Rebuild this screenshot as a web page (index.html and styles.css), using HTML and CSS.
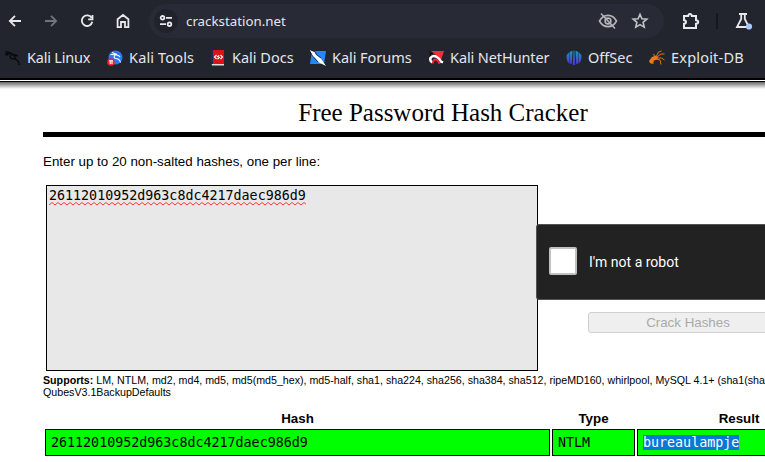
FILE: index.html
```html
<!DOCTYPE html>
<html lang="en">
<head>
<meta charset="utf-8">
<title>CrackStation</title>
<link rel="stylesheet" href="styles.css">
</head>
<body>
<header class="chrome">
  <div class="toolbar">
    <svg class="nav" viewBox="0 0 16 16"><path d="M14 8H3M8 2.800 2.800 8 8 13.200"/></svg>
    <svg class="nav forward" viewBox="0 0 16 16"><path d="M2 8h11M8 2.800 13.200 8 8 13.200"/></svg>
    <svg class="nav" viewBox="0 0 16 16"><path d="M12.600 4.800A5.300 5.300 0 1 0 13.300 8.800M13.500 2v4.300H9.200"/></svg>
    <svg class="nav" viewBox="0 0 16 16"><path d="M2.600 6.200 8 2l5.400 4.200v7.900H10V9H6v5.100H2.600z"/></svg>
    <div class="omnibox">
      <span class="site"><svg viewBox="0 0 14 14"><circle cx="3.500" cy="3.800" r="1.800"/><circle cx="10.500" cy="10.200" r="1.800"/><path d="M7 3.800h6M1 10.200h6"/></svg></span>
      <span class="url">crackstation.net</span>
      <svg class="eye" viewBox="0 0 20 18"><path d="M1.500 9Q4.500 3.400 10 3.400T18.500 9Q15.500 14.600 10 14.600T1.500 9z"/><circle cx="10" cy="9" r="2.900"/><path d="M3 1.500 17 16.500"/></svg>
      <svg class="star" viewBox="0 0 18 18"><path d="m9 2.200 1.900 4.500 4.900.4-3.700 3.200 1.100 4.800L9 12.600l-4.200 2.500 1.100-4.800-3.700-3.200 4.900-.4z"/></svg>
    </div>
    <svg class="puzzle" viewBox="0 0 18 18"><path d="M2 4h4.200q.2-2 1.800-2t1.800 2H14v4.200q2.200.2 2.200 1.800T14 11.800V16H2v-4.200q2-.2 2-1.800T2 8.200z"/></svg>
    <span class="divider"></span>
    <svg class="flask" viewBox="0 0 18 18"><path d="M4 2h8M6.200 2v5L2 15h12L9.800 7V2"/><circle class="dot" cx="14" cy="14.500" r="3.100"/></svg>
  </div>
  <nav class="bookmarks">
    <a class="bm linux"><svg viewBox="0 0 16 16"><path class="dark" d="M.5 1.500 4 2.500 7.500 4M0 4l4-.5L1.500 5.500M6 5Q4 7 6.500 8.500q4 0 6 2 1.500 1.500 2 4.500M5.500 4 9 4.500l4 1.500M8 5l3 3"/></svg>Kali Linux</a>
    <a class="bm tools"><svg viewBox="0 0 16 16"><circle cx="8.500" cy="7.500" r="7" fill="#2777ff"/><path class="white" d="m3.500 4.500 5 .3q4 .7 4.500 2.200M8 5Q6 7.500 8.500 8.500q4 0 5 4M5 2.500l5 2"/><circle cx="4" cy="12" r="3.800" fill="#ed2433"/><path class="white" d="M2 10.800h4M3.200 11v3M5 11v3"/></svg>Kali Tools</a>
    <a class="bm docs"><svg viewBox="0 0 16 16"><path d="M1 0h13v15H1z" fill="#d91419"/><path d="M1 0h2v14H1z" fill="#192955"/><path d="M2 14h12v1.500H2z" fill="#ddd"/><path class="white" d="M6.500 5 4.500 7l2 2M10.500 5l2 2-2 2M9.200 5.500 7.500 6.500l1.800 1-1.800 1.500"/></svg>Kali Docs</a>
    <a class="bm forums"><svg viewBox="0 0 16 16"><path d="M2 1h14l-2 13H0z" fill="#2388ff"/><path d="m0 0 4.500 2 1.500 3 5 3.500 2 3L16 16l-5-2.500-2-1L5 8 2.500 6z" fill="#fff"/><path d="m1 0 4.500 2 1 2.500L11 8M0 2l3 4.500L8 12" fill="none" stroke="#111" stroke-width=".7"/></svg>Kali Forums</a>
    <a class="bm nethunter"><svg viewBox="0 0 16 16"><path d="M3 1h13l-3 9-5-5z" fill="#f42d38"/><path d="m1 1 4 2-3 4z" fill="#111"/><path d="M4.500 12.500Q1.500 11 2.500 8 4.500 5 8 6.500q3 1.500 5 5l2 1" fill="none" stroke="#fff" stroke-width="2.500"/><path d="M5 13.500q0-4 2.500-4t4 4.500" fill="none" stroke="#ed2939" stroke-width="1.800"/></svg>Kali NetHunter</a>
    <a class="bm offsec"><svg viewBox="0 0 16 16"><defs><linearGradient id="o" gradientUnits="userSpaceOnUse" x1="0" y1="0" x2="0" y2="15"><stop stop-color="#13a3b3"/><stop offset="1" stop-color="#5b27dc"/></linearGradient></defs><path fill="url(#o)" d="M3 2.500v11Q.5 11 .5 7.500T3 2.500zM3.500 2 6.500.8 5.800 14l-2.300-.5zM7.600.5h.8l.8 14.500H6.800zM9.500.8l3 1.200v11.500l-2.300.5zM13 2.500q2.500 1.500 2.500 5T13 13.500z"/></svg>OffSec</a>
    <a class="bm exploit"><svg viewBox="0 0 16 16"><path d="m0 11 3-4 4-1.500 2 2-1 2-3 1L3 14l-2-1z" fill="#ec7b13"/><path class="orange" d="M7 7 9.500 2l3-1M8 7l4-3h3.500M8 8h4.500l3 2M7 9l4 1 1 4.500M6 7 4.500 4M4 10v4"/></svg>Exploit-DB</a>
  </nav>
</header>
<div class="page-edge"></div>
<main class="viewport">
<div class="page">
  <h1>Free Password Hash Cracker</h1>
  <p class="intro">Enter up to 20 non-salted hashes, one per line:</p>
  <div class="form">
    <div class="hashes"><span class="misspelt">26112010952d963c8dc4217daec986d9<svg class="wave" width="257" height="4"><defs><pattern id="w" width="6" height="4" patternUnits="userSpaceOnUse"><path d="M-1 2 0 3 3 .5 6 3l1-1" fill="none" stroke="#f22" stroke-width=".9"/></pattern></defs><rect width="257" height="4" fill="url(#w)"/></svg></span></div>
    <div class="side">
      <div class="captcha"><span class="check"></span><span class="label">I'm not a robot</span></div>
      <div class="crack">Crack Hashes</div>
    </div>
  </div>
  <p class="supports"><b>Supports:</b> LM, NTLM, md2, md4, md5, md5(md5_hex), md5-half, sha1, sha224, sha256, sha384, sha512, ripeMD160, whirlpool, MySQL 4.1+ (sha1(sha<br>QubesV3.1BackupDefaults</p>
  <table class="results">
    <thead><tr><th class="c-hash">Hash</th><th class="c-type">Type</th><th class="c-result">Result</th></tr></thead>
    <tbody><tr><td>26112010952d963c8dc4217daec986d9</td><td>NTLM</td><td><span class="selected">bureaulampje</span></td></tr></tbody>
  </table>
</div>
</main>
</body>
</html>
```
FILE: styles.css
```css
* { box-sizing: border-box; }
html, body { overflow: hidden; }
body { margin: 0; width: 765px; height: 462px; background: #fff; color: #000; font-family: "Liberation Sans", Arial, sans-serif; }
svg { display: block; flex: none; }

.chrome { height: 78px; background: #22252e; color: #e4e6eb; font-family: "Noto Sans", sans-serif; }
.toolbar { display: flex; align-items: center; height: 42px; padding-left: 7px; }
.toolbar svg { fill: none; stroke: #e8e9ec; stroke-width: 1.8; }
.nav { width: 16px; height: 16px; margin-right: 20px; }
.toolbar .forward { stroke: #72747a; }
.omnibox { display: flex; align-items: center; width: 515px; height: 34px; margin: 0 18px 0 -2px; padding-left: 5px; border-radius: 17px; background: #282a35; }
.site { display: flex; align-items: center; justify-content: center; width: 24px; height: 24px; border-radius: 50%; background: #20232b; }
.site svg { width: 14px; height: 14px; }
.url { width: 412px; margin-left: 8px; font-size: 13.3px; }
.toolbar .eye { width: 20px; height: 18px; stroke: #b5b6ba; stroke-width: 1.6; }
.toolbar .star { width: 18px; height: 18px; margin-left: 13px; stroke: #c2c3c7; stroke-width: 1.6; }
.puzzle { width: 18px; height: 18px; }
.toolbar .puzzle { stroke-width: 2; }
.divider { width: 2px; height: 16px; margin: 0 17px 0 16px; background: #15171c; }
.flask { width: 18px; height: 18px; }
.toolbar .dot { fill: #a8c7fa; stroke: none; }
.bookmarks { display: flex; align-items: center; height: 30px; padding-left: 5px; font-size: 14.5px; line-height: 20px; white-space: nowrap; }
.bm { display: flex; align-items: center; gap: 6px; flex: none; }
.bm svg { width: 16px; height: 16px; margin-top: 1px; }
.linux { width: 102px; letter-spacing: -.2px; }
.tools { width: 103px; letter-spacing: .15px; }
.docs { width: 100px; }
.forums { width: 118px; letter-spacing: -.05px; }
.nethunter { width: 138px; letter-spacing: -.1px; }
.offsec { width: 83px; }
.exploit { letter-spacing: .2px; }
.dark, .white, .orange { fill: none; }
.dark { stroke: #090a0c; stroke-width: 1.4; }
.white { stroke: #fff; stroke-width: 1.1; }
.orange { stroke: #d9771c; stroke-width: 1; }
.page-edge { height: 12px; background: linear-gradient(#000 0 2px, #fff 2px 3px, #000 3px 4px, #666 4px, #fff 11px); }

.viewport { height: 372px; padding-left: 43px; overflow: hidden; }
.page { width: 800px; }
h1 { height: 47px; margin: 0; padding-top: 8px; border-bottom: 5px solid #000; font: 25px/30px "Liberation Serif", serif; text-align: center; }
.intro { margin: 17px 0 0; font-size: 13.33px; line-height: 15px; }
.form { display: flex; height: 187px; margin: 16px 0 0 3px; }
.hashes { width: 492px; height: 186px; padding: 1px 2px; border: 1px solid #000; background: #e8e8e8; font: 13.33px/17px "DejaVu Sans Mono", monospace; }
.misspelt { position: relative; display: block; width: 257px; }
.wave { position: absolute; left: 0; top: 15px; }
.side { padding-top: 39px; }
.captcha { display: flex; align-items: center; width: 304px; height: 76px; margin-left: -2px; padding: 0 0 2px 12px; border: 1px solid #525252; border-radius: 3px; background: #222; color: #fff; position: relative; }
.check { width: 28px; height: 28px; border: 2px solid #c1c1c1; border-radius: 2px; background: #fff; }
.label { margin-left: 12px; padding-top: 2px; font: 14px/17px Roboto, sans-serif; }
.crack { width: 200px; height: 21px; margin: 12px 0 0 50px; border: 1px solid #d0d0d0; border-radius: 3px; background: #efefef; color: #aaa; font-size: 13.33px; line-height: 19px; text-align: center; }
.supports { margin: 2px 0 0; font-size: 10.67px; line-height: 12px; white-space: nowrap; }
.results { margin: 10px 0 0; width: 800px; border-spacing: 2px; table-layout: fixed; font-size: 13.33px; }
.c-hash { width: 505px; }
.c-type { width: 83px; }
th { height: 17px; padding: 0; line-height: 17px; }
td { height: 27px; padding: 0 5px; border: 1px solid #000; background: #0f0; font: 13.33px/16px "DejaVu Sans Mono", monospace; }
.selected { background: #0878d7; color: #fff; }
```
